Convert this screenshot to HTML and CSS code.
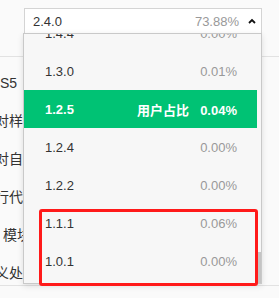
FILE: index.html
```html
<!DOCTYPE html>
<html lang="zh-CN">

<head>
    <meta charset="UTF-8">
    <title>版本占比</title>
    <link rel="stylesheet" href="styles.css">
</head>

<body>
    <div class="page">
        <div class="top">
            <div class="select">
                <span class="select-value">2.4.0</span>
                <span class="select-rate">73.88%</span>
                <svg class="caret" width="8" height="6" viewBox="0 0 8 6">
                    <polyline points="1,5 4,2 7,5" fill="none" stroke="#111" stroke-width="1.8" />
                </svg>
            </div>
        </div>
        <div class="rows">
            <div class="line">S5</div>
            <div class="line cut">对样式</div>
            <div class="line cut">对自定</div>
            <div class="line cut">行代码</div>
            <div class="line indent">模块</div>
            <div class="line cut">义处理</div>
        </div>

        <!-- 下拉列表（已滚动到底部） -->
        <div class="dropdown">
            <div class="list">
                <div class="item"><span>1.4.4</span><span class="rate">0.00%</span></div>
                <div class="item"><span>1.3.0</span><span class="rate">0.01%</span></div>
                <div class="item active"><span>1.2.5</span><span class="rate"><span class="label">用户占比</span>0.04%</span></div>
                <div class="item"><span>1.2.4</span><span class="rate">0.00%</span></div>
                <div class="item"><span>1.2.2</span><span class="rate">0.00%</span></div>
                <div class="item"><span>1.1.1</span><span class="rate">0.06%</span></div>
                <div class="item"><span>1.0.1</span><span class="rate">0.00%</span></div>
            </div>
            <div class="track"><div class="thumb"></div></div>
        </div>

        <div class="mark"></div>
    </div>
</body>

</html>
```

FILE: styles.css
```css
body {
    margin: 0;
    background-color: #fafafa;
    font-family: "Liberation Sans", Arial, "Noto Sans CJK SC", sans-serif;
    color: #333;
}

.page {
    position: relative;
    width: 279px;
    height: 298px;
    overflow: hidden;
}

.top {
    height: 57px;
    box-sizing: border-box;
    padding: 8px 0 0 24px;
    border-bottom: 1px solid #e2e2e2;
}

.select {
    width: 238px;
    height: 26px;
    box-sizing: border-box;
    background: #fff;
    border: 1px solid #d4d4d4;
    display: flex;
    align-items: center;
    padding: 0 5px 0 8px;
    font-size: 13px;
}

.select-value {
    flex: 1;
    color: #333;
}

.select-rate {
    color: #999;
    margin-right: 9px;
}

.caret {
    display: block;
}

.rows {
    height: 229px;
    box-sizing: border-box;
    padding-top: 7px;
    border-bottom: 1px solid #e2e2e2;
    font-size: 14px;
}

.line {
    height: 38px;
    line-height: 38px;
    white-space: nowrap;
}

.cut {
    margin-left: -5px;
}

.indent {
    margin-left: 3px;
}

.dropdown {
    position: absolute;
    left: 23px;
    top: 33px;
    width: 239px;
    height: 251px;
    box-sizing: border-box;
    background: #f7f7f7;
    border: 1px solid #c9c9c9;
    box-shadow: 0 2px 6px rgba(0, 0, 0, 0.12);
    display: flex;
    overflow: hidden;
}

.list {
    flex: 1;
    margin-top: -20px;
    font-size: 13px;
}

.item {
    height: 38px;
    display: flex;
    align-items: center;
    justify-content: space-between;
    padding: 0 20px 0 21px;
    color: #333;
}

.item .rate {
    color: #999;
}

.item.active {
    background: #00c274;
    color: #fff;
    font-weight: bold;
}

.item.active .rate {
    color: #fff;
}

.label {
    margin-right: 11px;
}

.track {
    width: 4px;
    display: flex;
    flex-direction: column;
    justify-content: flex-end;
}

.thumb {
    height: 31px;
    background: #c4c4c4;
}

.mark {
    position: absolute;
    left: 39px;
    top: 209px;
    width: 219px;
    height: 77px;
    box-sizing: border-box;
    border: 3px solid #ff1a1a;
    border-radius: 3px;
}
```
